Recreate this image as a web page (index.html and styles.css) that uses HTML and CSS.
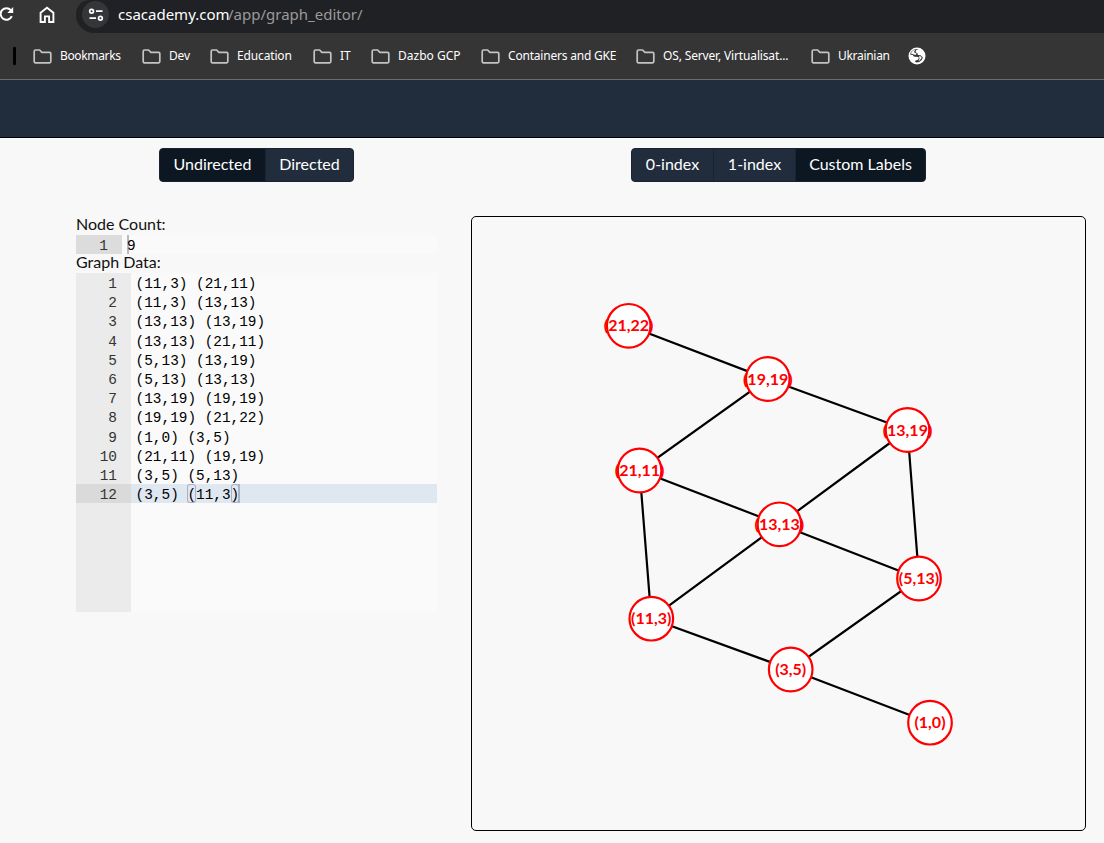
FILE: index.html
```html
<!DOCTYPE html>
<html lang="en">
<head>
<meta charset="utf-8">
<title>Graph Editor</title>
<link rel="stylesheet" href="styles.css">
</head>
<body>
<svg class="defs" width="0" height="0" aria-hidden="true">
  <symbol id="folder" viewBox="0 0 19 15">
    <path d="M1.2 12.6V2.4Q1.2 1 2.5 1H6.6L8.9 3.4H16.6Q17.8 3.4 17.8 4.6V12.6Q17.8 13.8 16.6 13.8H2.4Q1.2 13.8 1.2 12.6Z" fill="none" stroke="#c4c4c4" stroke-width="1.7"/>
  </symbol>
</svg>
<header class="browser">
  <div class="toolbar">
    <svg class="reload" width="14" height="16" viewBox="0 0 14 16"><path d="M11.8 10.2A5.8 5.8 0 1 1 10.9 4.2L12.3 5.8" fill="none" stroke="#fff" stroke-width="2"/><path d="M13.2 1V7H7.3Z" fill="#fff"/></svg>
    <svg class="home" width="16" height="18" viewBox="0 0 16 18"><path d="M1.6 6.7L8 1.8L14.4 6.7V16H10.1V10.4H5.9V16H1.6Z" fill="none" stroke="#fff" stroke-width="1.9"/></svg>
    <div class="address">
      <span class="site-info"><svg width="16" height="14" viewBox="0 0 16 14" fill="none" stroke="#fff" stroke-width="1.7"><circle cx="3.6" cy="3.2" r="1.9"/><path d="M8 3.2H14.5M1.5 10.2H8"/><circle cx="12.4" cy="10.2" r="1.9"/></svg></span>
      <span class="url"><span class="domain">csacademy.com</span><span class="path">/app/graph_editor/</span></span>
    </div>
  </div>
  <nav class="bookmarks">
    <span class="grip"></span>
    <a class="bm b1"><svg><use href="#folder"/></svg><span>Bookmarks</span></a>
    <a class="bm b2"><svg><use href="#folder"/></svg><span>Dev</span></a>
    <a class="bm b3"><svg><use href="#folder"/></svg><span>Education</span></a>
    <a class="bm b4"><svg><use href="#folder"/></svg><span>IT</span></a>
    <a class="bm b5"><svg><use href="#folder"/></svg><span>Dazbo GCP</span></a>
    <a class="bm b6"><svg><use href="#folder"/></svg><span>Containers and GKE</span></a>
    <a class="bm b7"><svg><use href="#folder"/></svg><span>OS, Server, Virtualisat...</span></a>
    <a class="bm b8"><svg><use href="#folder"/></svg><span>Ukrainian</span></a>
    <svg class="globe" width="18" height="18" viewBox="0 0 18 18"><circle cx="9" cy="9" r="8.5" fill="#fff"/><path d="M10.6 2L8 3.3L7.6 5.2L9.6 6.3L9.8 8L12.6 8.3L14.9 10.4Q14.2 13.2 11.3 15L8.6 15.4L7 14.6L7.6 13.4L9.5 13L10.8 11.4L10.4 10L7.4 9.8L5.8 9.6L4.8 8.1L2 7.4Q2.4 4.8 5.2 3L7 2.2Z" fill="#353535"/><path d="M7.6 2.4Q4 3.2 2.7 6.6L5.4 7.3L7.4 8L8.8 6.6L6.4 5.8L6.3 4.1Z" fill="#fff"/><path d="M10.8 9.2L13.2 9.4L13.6 11L11.6 13.6L10.4 14.2L11.6 11.6Z" fill="#fff"/></svg>
  </nav>
</header>
<div class="site-header"></div>
<main class="page">
  <section class="data-panel">
    <div class="btn-group kind"><button class="on">Undirected</button><button>Directed</button></div>
    <div class="label">Node Count:</div>
    <div class="editor count">
      <div class="row"><span class="num">1</span><span class="code"><i class="caret"></i>9</span></div>
    </div>
    <div class="label second">Graph Data:</div>
    <div class="editor edges">
      <div class="row"><span class="num">1</span><span class="code">(11,3) (21,11)</span></div>
      <div class="row"><span class="num">2</span><span class="code">(11,3) (13,13)</span></div>
      <div class="row"><span class="num">3</span><span class="code">(13,13) (13,19)</span></div>
      <div class="row"><span class="num">4</span><span class="code">(13,13) (21,11)</span></div>
      <div class="row"><span class="num">5</span><span class="code">(5,13) (13,19)</span></div>
      <div class="row"><span class="num">6</span><span class="code">(5,13) (13,13)</span></div>
      <div class="row"><span class="num">7</span><span class="code">(13,19) (19,19)</span></div>
      <div class="row"><span class="num">8</span><span class="code">(19,19) (21,22)</span></div>
      <div class="row"><span class="num">9</span><span class="code">(1,0) (3,5)</span></div>
      <div class="row"><span class="num">10</span><span class="code">(21,11) (19,19)</span></div>
      <div class="row"><span class="num">11</span><span class="code">(3,5) (5,13)</span></div>
      <div class="row active"><span class="num">12</span><span class="code">(3,5) <b class="bracket">(</b>11,3<b class="bracket">)</b><i class="caret"></i></span></div>
    </div>
  </section>
  <section class="graph-panel">
    <div class="btn-group index"><button>0-index</button><button>1-index</button><button class="on">Custom Labels</button></div>
    <div class="canvas">
      <svg width="613" height="613" viewBox="472 217 613 613">
        <g class="edge">
          <path d="M628.7 325.8L767.8 379L907.5 430L919 578.5L790.7 669.5L651.3 618.7L639.6 470.5L767.8 379"/>
          <path d="M639.6 470.5L779.4 524.3L919 578.5M907.5 430L779.4 524.3L651.3 618.7M790.7 669.5L930 722.7"/>
        </g>
        <g class="node">
          <circle cx="628.7" cy="325.8" r="21.8"/><circle cx="767.8" cy="379" r="21.8"/><circle cx="907.5" cy="430" r="21.8"/>
          <circle cx="639.6" cy="470.5" r="21.8"/><circle cx="779.4" cy="524.3" r="21.8"/><circle cx="919" cy="578.5" r="21.8"/>
          <circle cx="651.3" cy="618.7" r="21.8"/><circle cx="790.7" cy="669.5" r="21.8"/><circle cx="930" cy="722.7" r="21.8"/>
        </g>
        <g class="node-label">
          <text x="628.7" y="331.1">(21,22)</text><text x="767.8" y="384.8">(19,19)</text><text x="907.5" y="435.8">(13,19)</text>
          <text x="639.6" y="476.1">(21,11)</text><text x="779.4" y="530.1">(13,13)</text><text x="919" y="584">(5,13)</text>
          <text x="651.3" y="624">(11,3)</text><text x="790.7" y="675.1">(3,5)</text><text x="930" y="728.1">(1,0)</text>
        </g>
      </svg>
    </div>
  </section>
</main>
</body>
</html>
```
FILE: styles.css
```css
* { box-sizing: border-box; }
body { margin: 0; width: 1104px; height: 843px; overflow: hidden; background: #f8f8f8; font-family: Lato, sans-serif; font-size: 16px; color: #111; }
.defs { display: block; }
.browser { height: 80px; background: #353535; border-bottom: 1px solid #6b6b6b; font-family: "Noto Sans", "Open Sans", sans-serif; color: #fff; }
.toolbar { height: 33px; display: flex; align-items: flex-start; }
.reload { margin-top: 6px; }
.home { margin: 6px 0 0 25px; }
.address { margin-left: 21px; flex: 1; height: 33px; background: #202124; border-bottom-left-radius: 18px; border-top-left-radius: 14px; display: flex; }
.site-info { width: 27px; height: 27px; margin: 1px 0 0 6px; border-radius: 50%; background: #353638; display: flex; align-items: center; justify-content: center; }
.url { margin-left: 9px; font-size: 15px; line-height: 29px; white-space: nowrap; }
.domain { display: inline-block; width: 110px; }
.path { color: #9a9a9a; }
.bookmarks { height: 46px; display: flex; align-items: center; font-size: 12px; letter-spacing: -0.15px; }
.grip { width: 3px; height: 18px; margin: 0 17px 0 13px; background: #000; border-radius: 1px; }
.bm { display: flex; align-items: center; flex: none; white-space: nowrap; }
.bm svg { width: 19px; height: 15px; margin-right: 8px; flex: none; }
.bm span { padding-bottom: 1px; }
.b1 { width: 109px; letter-spacing: -0.35px; }
.b2 { width: 68px; }
.b3 { width: 103px; }
.b4 { width: 58px; }
.b5 { width: 110px; letter-spacing: 0; }
.b6 { width: 155px; letter-spacing: -0.2px; }
.b7 { width: 175px; }
.b8 { width: 97px; letter-spacing: -0.3px; }
.site-header { height: 58px; background: #212d3d; border-bottom: 1px solid #000; }
.page { display: flex; padding-top: 10px; }
.data-panel { width: 361px; margin-left: 76px; }
.graph-panel { width: 615px; margin-left: 34px; }
.btn-group { display: flex; height: 34px; border: 1px solid #182431; border-radius: 4px; overflow: hidden; background: #212d3d; }
.btn-group button { border: 0; border-left: 1px solid #182431; padding: 0 0 4px; margin: 0; background: #212d3d; color: #fff; font: 16px Lato, sans-serif; flex: 1; }
.btn-group button:first-child { border-left: 0; }
.btn-group .on { background: #0c1722; }
.kind { width: 195px; margin-left: 83px; }
.kind .on { flex: 0 0 105px; }
.index { width: 295px; margin-left: 160px; }
.index button { flex: 0 0 82px; }
.index button:first-child { flex-basis: 81px; }
.index .on { flex: 1; }
.label { height: 19px; line-height: 15px; margin-top: 34px; }
.label.second { margin-top: 0; }
.editor { background: #fafafa; font-family: "Liberation Mono", monospace; font-size: 14.4px; line-height: 22.2px; }
.row { display: flex; height: 19.2px; }
.count { height: 19px; overflow: hidden; }
.num { width: 55px; padding-right: 14px; text-align: right; color: #333; }
.count .num { width: 46px; background: #dcdcdc; }
.code { flex: 1; padding-left: 4.6px; white-space: pre; color: #000; }
.count .caret { display: inline-block; width: 2px; height: 19px; margin: 0 -2px 0 0; background: #bbb; vertical-align: top; }
.count .code { padding-left: 5px; }
.edges { height: 339px; background: linear-gradient(to right, #ebebeb 55px, #fafafa 55px); }
.active { background: linear-gradient(to right, #dadada 55px, #dfe7f1 55px); }
.bracket { display: inline-block; height: 19px; font-weight: 400; border-radius: 3px; box-shadow: inset 0 0 0 1px #a9afcb; vertical-align: top; }
.active .caret { display: inline-block; width: 2px; height: 19px; margin-left: -1px; background: #aab3bf; vertical-align: top; }
.canvas { height: 615px; margin-top: 34px; border: 1px solid #000; border-radius: 5px; }
.canvas svg { display: block; }
.edge { fill: none; stroke: #000; stroke-width: 2.2; }
.node { fill: #fff; stroke: #f00; stroke-width: 2.2; }
.node-label { fill: #f00; font: bold 16px Lato, sans-serif; text-anchor: middle; }
```
